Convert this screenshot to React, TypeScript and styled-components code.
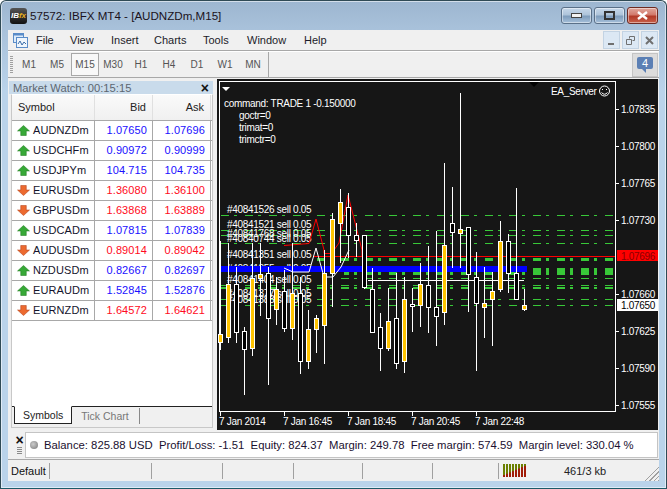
import styled, { createGlobalStyle } from "styled-components";

const GlobalStyle = createGlobalStyle`
  html, body {
    margin: 0;
    padding: 0;
    overflow: hidden;
  }
  * {
    box-sizing: border-box;
  }
`;

const UI_FONT = `"Liberation Sans", Arial, sans-serif`;

const Window = styled.div`
  width: 667px;
  height: 489px;
  display: flex;
  flex-direction: column;
  font-family: ${UI_FONT};
  font-size: 11px;
  color: #111;
  background: linear-gradient(180deg, #9db6d0 0px, #a9c2db 30px, #bad3ea 90px, #bad3ea 100%);
  border: 1px solid #2f4a55;
  border-bottom-color: #1c5a68;
  border-radius: 6px 6px 0 0;
  box-shadow: inset 0 0 0 1px rgba(255, 255, 255, 0.55);
`;

const TitleBar = styled.div`
  height: 29px;
  flex: none;
  display: flex;
  align-items: center;
  padding: 0 8px 0 9px;
`;

const AppIcon = styled.div`
  width: 17px;
  height: 16px;
  border-radius: 3px;
  background: linear-gradient(180deg, #555, #111);
  color: #fff;
  font-size: 8px;
  font-weight: bold;
  font-style: italic;
  line-height: 16px;
  text-align: center;
  overflow: hidden;
  white-space: nowrap;
  span {
    color: #e8b020;
  }
`;

const TitleText = styled.div`
  margin-left: 3px;
  flex: 1;
  font-size: 11.6px;
  color: #1a1220;
`;

const CaptionButton = styled.div<{ $close?: boolean }>`
  width: 31px;
  height: 17px;
  margin-left: 2px;
  border: 1px solid ${(p) => (p.$close ? "#6e2a22" : "#5a7088")};
  border-radius: 3px;
  background: ${(p) =>
    p.$close
      ? "linear-gradient(180deg, #e0a79d 0%, #d27a6c 45%, #b23a28 55%, #c8604a 100%)"
      : "linear-gradient(180deg, #c7d8ea 0%, #aec4da 45%, #7f9dbc 55%, #a6c0da 100%)"};
  box-shadow: inset 0 0 0 1px rgba(255, 255, 255, 0.45);
  display: flex;
  align-items: center;
  justify-content: center;
`;

const Client = styled.div`
  flex: 1;
  min-height: 0;
  display: flex;
  flex-direction: column;
  margin: 0 7px 7px 7px;
  background: #f0f0f0;
`;

const MenuBar = styled.div`
  height: 21px;
  flex: none;
  display: flex;
  align-items: center;
  padding-left: 5px;
  border-bottom: 1px solid #a8a8a8;
`;

const MenuItem = styled.div<{ $w: number }>`
  width: ${(p) => p.$w}px;
  flex: none;
  font-size: 11px;
  color: #1c1c2a;
`;

const MdiButtons = styled.div`
  margin-left: auto;
  display: flex;
  gap: 2px;
  padding-right: 1px;
`;

const MdiButton = styled.div`
  width: 17px;
  height: 18px;
  background: #dce8f4;
  border: 1px solid #c3d3e3;
  display: flex;
  align-items: center;
  justify-content: center;
`;

const ToolBar = styled.div`
  height: 27px;
  flex: none;
  display: flex;
  align-items: center;
  padding-left: 2px;
  border-top: 1px solid #fff;
  border-bottom: 1px solid #a8a8a8;
`;

const Grip = styled.div`
  width: 3px;
  height: 18px;
  margin-right: 2px;
  background: repeating-linear-gradient(180deg, #a0a0a0 0 1px, #f0f0f0 1px 2px);
`;

const Period = styled.div<{ $active?: boolean }>`
  width: 28px;
  height: 23px;
  line-height: 21px;
  text-align: center;
  font-size: 10px;
  color: #555;
  border: 1px solid ${(p) => (p.$active ? "#a8a8a8" : "transparent")};
  background: ${(p) => (p.$active ? "#f8f8f8" : "transparent")};
`;

const ToolDivider = styled.div`
  width: 1px;
  height: 25px;
  margin-left: 1px;
  background: #a8a8a8;
`;

const NotifyButton = styled.div`
  margin-left: auto;
  margin-right: 1px;
  width: 26px;
  height: 24px;
  background: #dcdcdc;
  border: 1px solid #c4c4c4;
  display: flex;
  align-items: center;
  justify-content: center;
`;

const Bubble = styled.div`
  position: relative;
  width: 16px;
  height: 12px;
  margin-bottom: 3px;
  background: #5b7fb4;
  border-radius: 2px;
  color: #fff;
  font-size: 11px;
  line-height: 12px;
  text-align: center;
  &::after {
    content: "";
    position: absolute;
    left: 5px;
    top: 12px;
    border-left: 4px solid transparent;
    border-top: 4px solid #5b7fb4;
  }
`;

const Main = styled.div`
  height: 352px;
  flex: none;
  display: flex;
  padding-top: 1px;
`;

const MarketPanel = styled.div`
  width: 206px;
  flex: none;
  display: flex;
  flex-direction: column;
  margin: 2px 0 0 1px;
`;

const PanelTitle = styled.div`
  height: 13px;
  margin-right: 2px;
  flex: none;
  display: flex;
  align-items: center;
  justify-content: space-between;
  padding: 0 4px;
  background: #c9dbeb;
  color: #5c6670;
  font-size: 11.2px;
`;

const CloseMark = styled.span`
  font-size: 14px;
  font-weight: bold;
  color: #111;
  line-height: 10px;
`;

const TableBox = styled.div`
  flex: 1;
  min-height: 0;
  margin: 0 2px 2px 2px;
  display: flex;
  flex-direction: column;
  background: #fff;
  border: 1px solid #c8c8c8;
  border-top-color: #fff;
  padding-top: 0;
`;

const Table = styled.div`
  flex: 1;
`;

const HeaderRow = styled.div`
  height: 26px;
  display: grid;
  grid-template-columns: 83px 58px 58px;
  align-items: center;
  background: linear-gradient(180deg, #fafafa, #f0f0f0);
  border-bottom: 1px solid #a8a8a8;
`;

const HeaderCell = styled.div<{ $right?: boolean }>`
  height: 100%;
  line-height: 25px;
  padding: 0 6px;
  text-align: ${(p) => (p.$right ? "right" : "left")};
  border-right: 1px solid #e0e0e0;
  color: #222;
`;

const Row = styled.div`
  height: 20px;
  display: grid;
  grid-template-columns: 83px 58px 58px;
  border-bottom: 1px solid #a8a8a8;
`;

const SymbolCell = styled.div`
  display: flex;
  align-items: center;
  gap: 3px;
  padding: 0 0 1px 5px;
  border-right: 1px solid #a8a8a8;
  color: #14142c;
  letter-spacing: 0.1px;
`;

const PriceCell = styled.div<{ $up: boolean }>`
  line-height: 18px;
  text-align: right;
  padding-right: 5px;
  border-right: 1px solid #a8a8a8;
  letter-spacing: 0.1px;
  color: ${(p) => (p.$up ? "#1a10ff" : "#ff0a22")};
`;

const Tabs = styled.div`
  height: 21px;
  flex: none;
  display: flex;
  align-items: flex-start;
  padding-left: 2px;
  border-top: 1px solid #222;
  background: #f0f0f0;
`;

const ActiveTab = styled.div`
  height: 18px;
  margin-top: -1px;
  padding: 0 8px;
  line-height: 17px;
  font-size: 10.5px;
  background: #fff;
  color: #222;
  border: 1px solid #222;
  border-top-color: #fff;
`;

const IdleTab = styled.div`
  height: 16px;
  margin: 1px 0 0 0;
  padding: 0 10px 0 9px;
  line-height: 17px;
  font-size: 10.5px;
  color: #777;
  border-right: 1px solid #888;
`;

const ChartPanel = styled.div`
  width: 441px;
  flex: none;
  margin-left: 2px;
  background: #161616;
`;

const ChartSvg = styled.svg`
  display: block;
  font-family: ${UI_FONT};
  font-size: 10px;
  letter-spacing: -0.3px;
`;

const TerminalBar = styled.div`
  height: 30px;
  flex: none;
  display: flex;
  align-items: center;
  padding: 0 1px 0 7px;
  border-bottom: 1px solid #a8a8a8;
`;

const TerminalGrip = styled.div`
  width: 9px;
  display: flex;
  flex-direction: column;
  align-items: center;
  gap: 2px;
  i {
    width: 5px;
    height: 7px;
    background: repeating-linear-gradient(180deg, #8a8a8a 0 1px, #f0f0f0 1px 2px);
  }
`;

const Balance = styled.div`
  margin-left: 1px;
  flex: 1;
  height: 26px;
  display: flex;
  align-items: center;
  padding-left: 4px;
  gap: 6px;
  background: #fff;
  border: 1px solid #c4c4c4;
  color: #1a1030;
  white-space: pre;
  font-size: 11.3px;
`;

const LedDot = styled.div`
  width: 8px;
  height: 8px;
  border-radius: 50%;
  background: radial-gradient(circle at 40% 40%, #ccc, #777);
`;

const StatusBar = styled.div`
  flex: 1;
  display: flex;
  align-items: center;
  position: relative;
`;

const StatusCell = styled.div<{ $w: number }>`
  width: ${(p) => p.$w}px;
  height: 16px;
  flex: none;
  padding-left: 3px;
  line-height: 16px;
  border-right: 1px solid #a0a0a0;
  white-space: nowrap;
`;

const Traffic = styled.div`
  width: 65px;
  flex: none;
  padding-left: 4px;
  display: flex;
  align-items: center;
`;

const Kb = styled.div`
  color: #222;
`;

const ResizeGrip = styled.div`
  position: absolute;
  right: 0;
  bottom: 0;
  width: 15px;
  height: 15px;
  background: repeating-linear-gradient(135deg, transparent 0 2px, #a0a0a0 2px 3px);
  clip-path: polygon(100% 0, 100% 100%, 0 100%);
`;

type Quote = { symbol: string; bid: string; ask: string; up: boolean };

const quotes: Quote[] = [
  { symbol: "AUDNZDm", bid: "1.07650", ask: "1.07696", up: true },
  { symbol: "USDCHFm", bid: "0.90972", ask: "0.90999", up: true },
  { symbol: "USDJPYm", bid: "104.715", ask: "104.735", up: true },
  { symbol: "EURUSDm", bid: "1.36080", ask: "1.36100", up: false },
  { symbol: "GBPUSDm", bid: "1.63868", ask: "1.63889", up: false },
  { symbol: "USDCADm", bid: "1.07815", ask: "1.07839", up: true },
  { symbol: "AUDUSDm", bid: "0.89014", ask: "0.89042", up: false },
  { symbol: "NZDUSDm", bid: "0.82667", ask: "0.82697", up: true },
  { symbol: "EURAUDm", bid: "1.52845", ask: "1.52876", up: true },
  { symbol: "EURNZDm", bid: "1.64572", ask: "1.64621", up: false },
];

// high, low, body top, body bottom, kind (y = yellow, h = hollow)
const candles: [number, number, number, number, "y" | "h"][] = [
  [241, 350, 334, 342, "y"],
  [243, 343, 284, 337, "y"],
  [267, 343, 284, 332, "h"],
  [327, 395, 331, 349, "h"],
  [243, 356, 278, 348, "y"],
  [243, 316, 274, 278, "y"],
  [267, 385, 273, 318, "h"],
  [277, 325, 289, 309, "y"],
  [270, 332, 291, 328, "h"],
  [243, 340, 293, 328, "y"],
  [277, 374, 293, 361, "h"],
  [310, 369, 329, 361, "y"],
  [315, 353, 318, 329, "y"],
  [250, 364, 273, 325, "y"],
  [213, 307, 219, 273, "y"],
  [189, 263, 202, 223, "y"],
  [193, 258, 207, 235, "h"],
  [223, 257, 235, 240, "h"],
  [235, 289, 235, 287, "h"],
  [268, 332, 289, 332, "h"],
  [313, 371, 327, 348, "h"],
  [288, 351, 321, 348, "y"],
  [273, 369, 318, 363, "h"],
  [277, 373, 299, 361, "y"],
  [288, 332, 304, 306, "h"],
  [263, 327, 284, 305, "y"],
  [246, 333, 285, 307, "h"],
  [231, 346, 307, 316, "h"],
  [163, 325, 245, 312, "y"],
  [187, 268, 223, 232, "h"],
  [93, 268, 229, 233, "y"],
  [227, 312, 227, 274, "h"],
  [252, 371, 277, 303, "h"],
  [267, 338, 303, 307, "y"],
  [272, 346, 291, 299, "y"],
  [221, 292, 241, 289, "y"],
  [234, 293, 241, 273, "h"],
  [188, 299, 273, 299, "h"],
  [289, 311, 305, 309, "y"],
];

const thinDashes = [215, 230, 235, 243, 299, 305];
// y, thickness, first x
const thickDashes: [number, number, number][] = [
  [259.5, 3, 315],
  [271.5, 7, 343],
  [278.5, 1, 340],
  [285.5, 1, 219],
  [288, 2, 219],
];

const orders: [string, number][] = [
  ["#40841526 sell 0.05", 213],
  ["#40841521 sell 0.05", 228],
  ["#40841768 sell 0.05", 237],
  ["#40840744 sell 0.05", 242],
  ["#40841351 sell 0.05", 258],
  ["#40841355 sell 0.05", 272],
  ["#40841404 sell 0.05", 283],
  ["#40841377 sell 0.05", 297],
  ["#40841388 sell 0.05", 303],
];

const priceTicks: [string, number][] = [
  ["1.07835", 109],
  ["1.07800", 146],
  ["1.07765", 183],
  ["1.07730", 220],
  ["1.07660", 294],
  ["1.07625", 331],
  ["1.07590", 368],
  ["1.07555", 405],
];

const timeTicks: [string, number][] = [
  ["7 Jan 2014", 219],
  ["7 Jan 16:45", 283],
  ["7 Jan 18:45", 347],
  ["7 Jan 20:45", 411],
  ["7 Jan 22:48", 475],
];

function TrendArrow({ up }: { up: boolean }) {
  return (
    <svg width="13" height="11" viewBox="0 0 14 12">
      {up ? (
        <path d="M7 0.5 L13.5 6.5 H10 V11.5 H4 V6.5 H0.5 Z" fill="#37a837" stroke="#1e7a1e" strokeWidth="0.6" />
      ) : (
        <path d="M7 11.5 L13.5 5.5 H10 V0.5 H4 V5.5 H0.5 Z" fill="#ec6a30" stroke="#b23c14" strokeWidth="0.6" />
      )}
    </svg>
  );
}

function DocIcon() {
  return (
    <svg width="15" height="15" viewBox="0 0 15 15" style={{ marginRight: 8 }}>
      <rect x="0.5" y="0.5" width="10" height="9" fill="#dcebfa" stroke="#5a8cc8" />
      <rect x="3.5" y="4.5" width="11" height="10" fill="#eef5fc" stroke="#5a8cc8" />
      <rect x="0.5" y="0.5" width="10" height="2" fill="#5a8cc8" />
      <path d="M5 11 L7 8 L9 12 L11 9 L13 11" fill="none" stroke="#3a6ca8" />
    </svg>
  );
}

function TrafficIcon() {
  const bars = Array.from({ length: 8 }, (_, i) => i);
  return (
    <svg width="24" height="13" viewBox="0 0 24 13">
      {bars.map((i) => (
        <g key={i}>
          <rect x={i * 3} y={0} width={2} height={13} fill="#6b8000" />
          <rect x={i * 3} y={11 - i * 1.3} width={2} height={2 + i * 1.3} fill="#a01c08" />
        </g>
      ))}
    </svg>
  );
}

function Chart() {
  return (
    <ChartSvg width="441" height="350" viewBox="216 79 441 350">
      <rect x="218.5" y="81.5" width="396" height="330" fill="none" stroke="#fff" />
      <path d="M221 87 H229 L225 91 Z" fill="#fff" />
      <path d="M528 82 H538 L533 87 Z" fill="#000" />

      {thinDashes.map((y) => (
        <line key={y} x1="219" x2="613" y1={y + 0.5} y2={y + 0.5} stroke="#38c838" strokeDasharray="8 5 3 8" strokeDashoffset="-1" />
      ))}
      {thickDashes.map(([y, w, x]) => (
        <line key={y} x1={x} x2="613" y1={y} y2={y} stroke="#38c838" strokeWidth={w} strokeDasharray="8 5 3 8" strokeDashoffset={x - 220} />
      ))}

      {orders.map(([label, y]) => (
        <text key={y} x="226" y={y} fill="#fff">
          {label}
        </text>
      ))}

      <line x1="219" x2="526" y1="269" y2="269" stroke="#0000ff" strokeWidth="6" />
      <line x1="312" x2="614" y1="256.5" y2="256.5" stroke="#ff0000" />
      <line x1="367" x2="523" y1="280.5" y2="280.5" stroke="#fff" />
      <polyline points="283,245.5 308,243.5 315,219 323,250 323,253.5 333,253.5 333,250 338,243 347,195 361,250 361,256" fill="none" stroke="#ff0000" />
      <polyline points="283,268 292,272 308,272 315,248 323,277 332,277 340,267 348,250" fill="none" stroke="#fff" />

      {candles.map(([high, low, top, bottom, kind], i) => {
        const x = 219 + 8 * i;
        return (
          <g key={i}>
            <line x1={x + 0.5} x2={x + 0.5} y1={high} y2={low} stroke="#fff" />
            <rect
              x={x - 1.5}
              y={top + 0.5}
              width="4"
              height={bottom - top}
              fill={kind === "y" ? "#ffc400" : "#000"}
              stroke="#fff"
            />
          </g>
        );
      })}

      <text x="223" y="107" fill="#fff">command: TRADE 1 -0.150000</text>
      <text x="238" y="119" fill="#fff">goctr=0</text>
      <text x="238" y="131" fill="#fff">trimat=0</text>
      <text x="238" y="143" fill="#fff">trimctr=0</text>
      <text x="550" y="95" fill="#fff">EA_Server</text>
      <g fill="none" stroke="#fff">
        <circle cx="603.5" cy="91" r="5" />
        <path d="M600.5 92.5 Q603.5 96 606.5 92.5" />
      </g>
      <rect x="601" y="89" width="1" height="1" fill="#fff" />
      <rect x="605" y="89" width="1" height="1" fill="#fff" />

      {priceTicks.map(([label, y]) => (
        <g key={label}>
          <line x1="615" x2="618" y1={y + 0.5} y2={y + 0.5} stroke="#fff" />
          <text x="620" y={y + 4} fill="#fff">{label}</text>
        </g>
      ))}
      <rect x="616" y="250" width="41" height="11" fill="#ff0000" />
      <text x="620" y="260" fill="#8a0000">1.07696</text>
      <rect x="616" y="299" width="41" height="12" fill="#fff" />
      <text x="620" y="309" fill="#000">1.07650</text>

      {timeTicks.map(([label, x]) => (
        <g key={label}>
          <line x1={x + 0.5} x2={x + 0.5} y1="412" y2="416" stroke="#fff" />
          <text x={x - 1} y="425" fill="#fff">{label}</text>
        </g>
      ))}
    </ChartSvg>
  );
}

const menus: [string, number][] = [
  ["File", 34],
  ["View", 41],
  ["Insert", 43],
  ["Charts", 49],
  ["Tools", 44],
  ["Window", 57],
  ["Help", 40],
];

const periods = ["M1", "M5", "M15", "M30", "H1", "H4", "D1", "W1", "MN"];

export default function App() {
  return (
    <Window>
      <GlobalStyle />
      <TitleBar>
        <AppIcon>
          IB<span>fx</span>
        </AppIcon>
        <TitleText>57572: IBFX MT4 - [AUDNZDm,M15]</TitleText>
        <CaptionButton>
          <svg width="11" height="5"><rect x="0.5" y="0.5" width="10" height="4" fill="#f2f2f2" stroke="#444" /></svg>
        </CaptionButton>
        <CaptionButton>
          <svg width="11" height="9"><rect x="1" y="1" width="9" height="7" fill="none" stroke="#333" strokeWidth="2" /></svg>
        </CaptionButton>
        <CaptionButton $close>
          <svg width="11" height="9"><path d="M1 1 L10 8 M10 1 L1 8" stroke="#fff" strokeWidth="2.4" /></svg>
        </CaptionButton>
      </TitleBar>
      <Client>
        <MenuBar>
          <DocIcon />
          {menus.map(([name, w]) => (
            <MenuItem key={name} $w={w}>{name}</MenuItem>
          ))}
          <MdiButtons>
            <MdiButton>
              <svg width="9" height="9"><rect x="1" y="7" width="6" height="2" fill="#707070" /></svg>
            </MdiButton>
            <MdiButton>
              <svg width="9" height="9"><path d="M3.5 2.5 V0.5 H8.5 V4.5 H6.5 M0.5 3.5 H5.5 V8.5 H0.5 Z" fill="none" stroke="#707070" /></svg>
            </MdiButton>
            <MdiButton>
              <svg width="9" height="9"><path d="M1 1 L8 8 M8 1 L1 8" stroke="#707070" strokeWidth="2" /></svg>
            </MdiButton>
          </MdiButtons>
        </MenuBar>
        <ToolBar>
          <Grip />
          {periods.map((p) => (
            <Period key={p} $active={p === "M15"}>{p}</Period>
          ))}
          <ToolDivider />
          <NotifyButton>
            <Bubble>4</Bubble>
          </NotifyButton>
        </ToolBar>
        <Main>
          <MarketPanel>
            <PanelTitle>
              Market Watch: 00:15:15
              <CloseMark>×</CloseMark>
            </PanelTitle>
            <TableBox>
              <Table>
                <HeaderRow>
                  <HeaderCell>Symbol</HeaderCell>
                  <HeaderCell $right>Bid</HeaderCell>
                  <HeaderCell $right>Ask</HeaderCell>
                </HeaderRow>
                {quotes.map((q) => (
                  <Row key={q.symbol}>
                    <SymbolCell>
                      <TrendArrow up={q.up} />
                      {q.symbol}
                    </SymbolCell>
                    <PriceCell $up={q.up}>{q.bid}</PriceCell>
                    <PriceCell $up={q.up}>{q.ask}</PriceCell>
                  </Row>
                ))}
              </Table>
              <Tabs>
                <ActiveTab>Symbols</ActiveTab>
                <IdleTab>Tick Chart</IdleTab>
              </Tabs>
            </TableBox>
          </MarketPanel>
          <ChartPanel>
            <Chart />
          </ChartPanel>
        </Main>
        <TerminalBar>
          <TerminalGrip>
            <CloseMark>×</CloseMark>
            <i />
          </TerminalGrip>
          <Balance>
            <LedDot />
            {"Balance: 825.88 USD  Profit/Loss: -1.51  Equity: 824.37  Margin: 249.78  Free margin: 574.59  Margin level: 330.04 %"}
          </Balance>
        </TerminalBar>
        <StatusBar>
          <StatusCell $w={42}>Default</StatusCell>
          <StatusCell $w={102} />
          <StatusCell $w={71} />
          <StatusCell $w={71} />
          <StatusCell $w={69} />
          <StatusCell $w={70} />
          <StatusCell $w={66} />
          <Traffic>
            <TrafficIcon />
          </Traffic>
          <Kb>461/3 kb</Kb>
          <ResizeGrip />
        </StatusBar>
      </Client>
    </Window>
  );
}
